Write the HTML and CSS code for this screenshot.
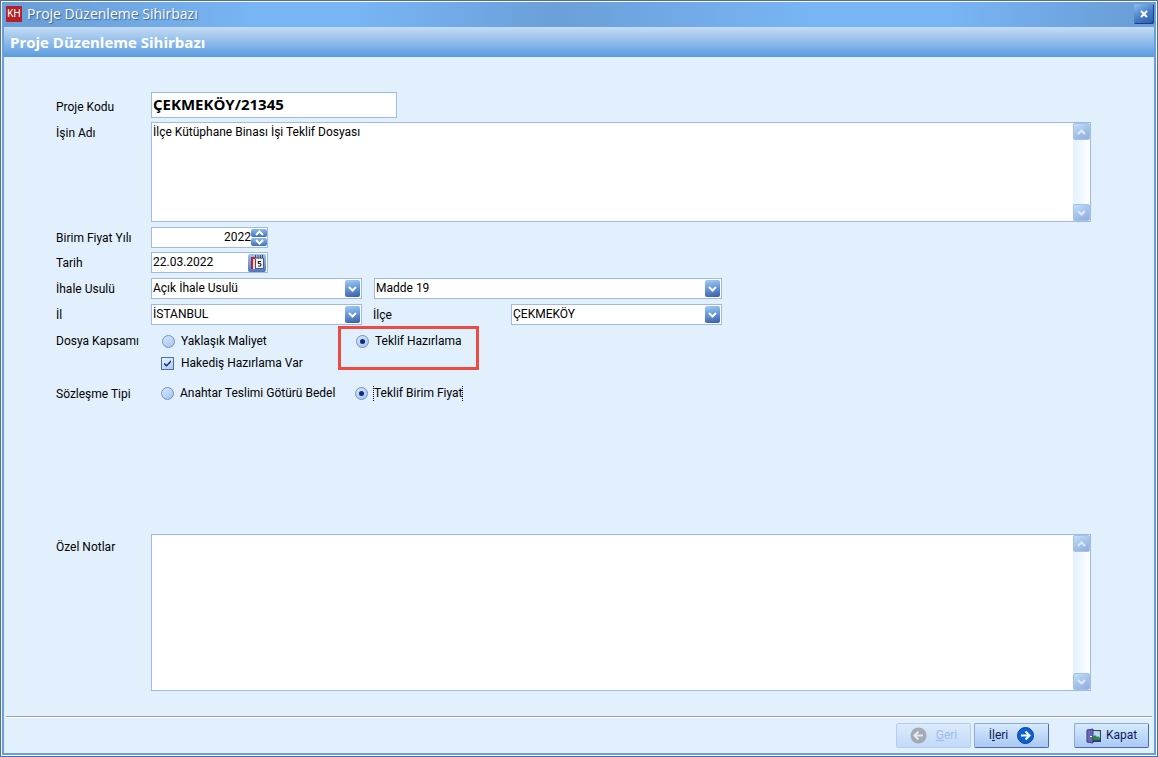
FILE: index.html
```html
<!DOCTYPE html>
<html lang="tr">
<head>
<meta charset="utf-8">
<title>Proje Düzenleme Sihirbazı</title>
<link rel="stylesheet" href="styles.css">
</head>
<body>
<svg width="0" height="0" class="defs" aria-hidden="true">
  <symbol id="down" viewBox="0 0 9 6"><path d="M1 1l3.500 3.500L8 1" fill="none" stroke="currentColor" stroke-width="2"/></symbol>
  <symbol id="up" viewBox="0 0 9 6"><path d="M1 5l3.500-3.500L8 5" fill="none" stroke="currentColor" stroke-width="2"/></symbol>
</svg>
<div class="window">
  <header class="titlebar">
    <span class="logo">KH</span>
    <span class="title">Proje Düzenleme Sihirbazı</span>
    <button class="close" type="button" aria-label="Pencereyi kapat"><svg width="8" height="8" viewBox="0 0 8 8"><path d="M1 1l6 6M7 1L1 7" stroke="#fff" stroke-width="2"/></svg></button>
  </header>
  <h1 class="banner">Proje Düzenleme Sihirbazı</h1>
  <form class="form">
    <div class="row row-code">
      <label class="label" for="kod">Proje Kodu</label>
      <input class="box code" id="kod" type="text" value="ÇEKMEKÖY/21345">
    </div>
    <div class="row">
      <label class="label" for="ad">İşin Adı</label>
      <div class="box memo memo-name">
        <textarea id="ad">İlçe Kütüphane Binası İşi Teklif Dosyası</textarea>
        <div class="scroll">
          <button type="button" disabled aria-label="Yukarı"><svg width="9" height="6"><use href="#up"/></svg></button>
          <button type="button" disabled aria-label="Aşağı"><svg width="9" height="6"><use href="#down"/></svg></button>
        </div>
      </div>
    </div>
    <div class="row row-year">
      <label class="label" for="yil">Birim Fiyat Yılı</label>
      <div class="box short">
        <input class="year" id="yil" type="number" value="2022">
        <div class="spin">
          <button type="button" aria-label="Artır"><svg width="9" height="6"><use href="#up"/></svg></button>
          <button type="button" aria-label="Azalt"><svg width="9" height="6"><use href="#down"/></svg></button>
        </div>
      </div>
    </div>
    <div class="row">
      <label class="label" for="tarih">Tarih</label>
      <div class="box short">
        <input id="tarih" type="text" value="22.03.2022">
        <button class="calendar" type="button" aria-label="Takvim">
          <svg width="17" height="17" viewBox="0 0 17 17">
            <path d="M3 3h3v12H3z" fill="#f0d0d4"/><path d="M2 3h2v12H2zM2 3h5v2H2z" fill="#c8202c"/>
            <path d="M6 4h8v10H6z" fill="#f4f4f6"/><path d="M6 3h8v2H6z" fill="#8a8f9c"/>
            <path d="M6.500 1v3M9 1v3M11.500 1v3M13.500 1v3M6.500 5v9" stroke="#4a5064"/>
            <path d="M12 7.500H9.500v2H11q1 0 1 1.200T11 12H9" fill="none" stroke="#222" stroke-width="1.200"/>
            <path d="M6 14.500h8.500V4" fill="none" stroke="#555c70"/>
          </svg>
        </button>
      </div>
    </div>
    <div class="row">
      <label class="label" for="usul">İhale Usulü</label>
      <div class="pair">
        <div class="box pick"><select id="usul"><option>Açık İhale Usulü</option></select><span class="arrow"><svg width="9" height="6"><use href="#down"/></svg></span></div>
        <div class="box pick wide"><select aria-label="Madde"><option>Madde 19</option></select><span class="arrow"><svg width="9" height="6"><use href="#down"/></svg></span></div>
      </div>
    </div>
    <div class="row">
      <label class="label" for="il">İl</label>
      <div class="pair">
        <div class="box pick"><select id="il"><option>İSTANBUL</option></select><span class="arrow"><svg width="9" height="6"><use href="#down"/></svg></span></div>
        <label class="sublabel" for="ilce">İlçe</label>
        <div class="box pick"><select id="ilce"><option>ÇEKMEKÖY</option></select><span class="arrow"><svg width="9" height="6"><use href="#down"/></svg></span></div>
      </div>
    </div>
    <div class="row row-scope">
      <span class="label">Dosya Kapsamı</span>
      <div class="choices">
        <label class="choice"><input class="radio" type="radio" name="kapsam">Yaklaşık Maliyet</label>
        <label class="choice marked"><input class="radio" type="radio" name="kapsam" checked>Teklif Hazırlama</label>
        <label class="choice"><input class="check" type="checkbox" checked>Hakediş Hazırlama Var</label>
      </div>
    </div>
    <div class="row row-contract">
      <span class="label">Sözleşme Tipi</span>
      <div class="choices">
        <label class="choice"><input class="radio" type="radio" name="tip">Anahtar Teslimi Götürü Bedel</label>
        <label class="choice"><input class="radio" type="radio" name="tip" checked><span class="focused">Teklif Birim Fiyat</span></label>
      </div>
    </div>
    <div class="row row-notes">
      <label class="label" for="notlar">Özel Notlar</label>
      <div class="box memo">
        <textarea id="notlar"></textarea>
        <div class="scroll">
          <button type="button" disabled aria-label="Yukarı"><svg width="9" height="6"><use href="#up"/></svg></button>
          <button type="button" disabled aria-label="Aşağı"><svg width="9" height="6"><use href="#down"/></svg></button>
        </div>
      </div>
    </div>
  </form>
  <footer class="footer">
    <button class="btn" type="button" disabled>
      <svg width="17" height="17" viewBox="0 0 17 17"><circle cx="8.500" cy="8.500" r="8" fill="#9a9da1"/><path d="M13 8.500H5M8.500 4.500l-4 4 4 4" fill="none" stroke="#e8edf3" stroke-width="2"/></svg>
      <span><u>G</u>eri</span>
    </button>
    <button class="btn" type="button">
      <span>İ<u>l</u>eri</span>
      <svg width="17" height="17" viewBox="0 0 17 17"><circle cx="8.500" cy="8.500" r="8" fill="#0c62d4" stroke="#0a3e96"/><path d="M4 8.500h8M8.500 4.500l4 4-4 4" fill="none" stroke="#fff" stroke-width="2"/></svg>
    </button>
    <button class="btn btn-close" type="button">
      <svg width="16" height="16" viewBox="0 0 16 16"><path d="M5 2h10v12H5z" fill="#2c3a78"/><path d="M7 3h7v9H7z" fill="#a8dcf8"/><path d="M7 12V9l2-2 2 2 1-1 2 2v2z" fill="#2f8a3a"/><path d="M11 3h3v3z" fill="#f3b73c"/><path d="M1 2l6-1v14l-6-1z" fill="#6a66b4" stroke="#3d3b88"/><path d="M4 8h2v1H4z" fill="#fff"/></svg>
      <span>Kapat</span>
    </button>
  </footer>
</div>
</body>
</html>
```
FILE: styles.css
```css
*, *::before, *::after { box-sizing: border-box; }
body {
  margin: 0;
  font: 12px/21px Roboto, "Open Sans", sans-serif;
  color: #000;
}
button, input, select, textarea { font: inherit; color: inherit; margin: 0; padding: 0; border: 0; outline: 0; }
button { display: flex; align-items: center; justify-content: center; }
.defs { position: absolute; }

.window {
  display: flex;
  flex-direction: column;
  min-height: 100vh;
  padding: 1px;
  border: 1px solid #4a6db5;
  background: #6b9fd8;
  box-shadow: inset 0 0 0 1px #fff;
}

.titlebar {
  display: flex; align-items: center; height: 25px; padding: 0 2px 0 4px;
  background: linear-gradient(90deg, #6b9fd8 3%, #78b5f4 22% 31%, #6b9fd8 48%, #78b5f4 70% 82%, #6b9fd8 97%);
}
.logo {
  width: 16px; height: 16px; margin-bottom: 1px;
  background: #b51f27; color: #fff;
  font-size: 10px; line-height: 16px; text-align: center;
}
.title { flex: 1; padding: 0 0 2px 5px; font-family: "Open Sans", sans-serif; font-size: 14px; color: #fff; text-shadow: 1px 1px 1px #3b6296; }
.close {
  width: 20px; height: 20px; margin-bottom: 1px; border-radius: 2px;
  background: linear-gradient(150deg, #8fc0f0, #4a80c8 50%, #2a58a8);
  box-shadow: inset -1px -1px 0 #1a3f88;
}
.banner {
  margin: 0 2px; padding: 0 6px;
  font: 700 15px/30px "Open Sans", sans-serif; color: #fff;
  background: linear-gradient(#c5dcf4, #5a9ce0);
}

.form {
  flex: 1;
  display: flex; flex-direction: column;
  margin: 0 2px; padding: 35px 63px 25px 52px;
  background: #e2f0fe;
}
.row { display: flex; margin-bottom: 5px; }
.row-code, .row-year { margin-bottom: 4px; }
.row-code .label { padding-top: 4px; }
.row-scope { margin-bottom: 9px; }
.row-notes { flex: 1; min-height: 157px; margin: 125px 0 0; }
.row-notes .label { padding-top: 2px; }
.label { width: 95px; flex: none; line-height: 23px; margin-bottom: -2px; }

.box { display: flex; background: #fff; border: 1px solid #9dbbe8; }
.box input { width: 100%; min-width: 0; background: none; }
.code.box { width: 246px; height: 26px; padding: 0 1px 2px; font: 700 15px/22px "Open Sans", sans-serif; }
.memo { flex: 1; min-width: 0; }
.memo-name { height: 100px; }
.memo textarea { flex: 1; min-width: 0; padding: 1px; line-height: 17px; resize: none; background: none; }
.scroll {
  width: 17px;
  display: flex; flex-direction: column; justify-content: space-between;
  background: linear-gradient(90deg, #e2f0fe, #fff);
}
.scroll button {
  width: 17px; height: 17px; border-radius: 2px; color: #dceafa;
  background: linear-gradient(150deg, #c4e0f8, #a5c3ea 50%, #92abd9);
  border: 1px solid #a5c3ea;
}

.short { width: 117px; height: 21px; padding-left: 1px; line-height: 19px; }
.year { text-align: right; appearance: textfield; }
.year::-webkit-inner-spin-button { appearance: none; }
.spin { display: flex; flex-direction: column; gap: 1px; padding: 1px 0; }
.spin button {
  width: 16px; height: 8px; color: #fff; border-radius: 2px;
  background: linear-gradient(#8dbbee, #3f6fb9);
}
.calendar {
  flex: none; align-self: center;
  width: 18px; height: 18px; margin-right: 1px; border-radius: 2px;
  background: linear-gradient(#9cc6f2, #4a78bf);
}

.pair { display: flex; gap: 12px; }
.pick { position: relative; width: 211px; height: 21px; }
.wide { width: 348px; }
.pick select { width: 100%; padding: 0 18px 0 1px; appearance: none; background: none; line-height: 19px; }
.arrow {
  position: absolute; right: 1px; top: 1px;
  width: 15px; height: 17px;
  display: flex; align-items: center; justify-content: center;
  color: #fff; border-radius: 2px; pointer-events: none;
  background: linear-gradient(170deg, #a3cdf6, #6596d6 50%, #3a5ca8);
}
.sublabel { width: 126px; margin-left: -1px; line-height: 23px; margin-bottom: -2px; }

.choices { display: grid; grid-template-columns: 194px auto; padding: 1px 0 0 11px; row-gap: 1px; }
.row-scope .choices { margin-bottom: -1px; }
.row-contract .choices { padding: 0 0 0 10px; }
.choice { display: flex; align-items: center; gap: 6px; white-space: nowrap; }
.radio, .check {
  appearance: none; flex: none;
  width: 13px; height: 13px;
  display: flex; align-items: center; justify-content: center;
}
.radio { border: 1px solid #7590c4; border-radius: 50%; background: linear-gradient(150deg, #d5e9fc, #a3c4f0); }
.radio:checked::before { content: ""; width: 5px; height: 5px; border-radius: 50%; background: #13287e; }
.check { margin: 0 1px 0 -1px; border: 1px solid #4f6cae; background: linear-gradient(150deg, #eaf5ff, #aac8f0); }
.check:checked::before {
  content: ""; width: 7px; height: 7px; background: #13287e;
  clip-path: polygon(0 40%, 36% 68%, 100% 5%, 100% 32%, 36% 98%, 0 66%);
}
.marked { position: relative; }
.marked::after {
  content: ""; position: absolute;
  left: -18px; top: -5px; width: 141px; height: 44px;
  border: 3px solid #ee4b44; pointer-events: none;
}
.row-contract { padding-top: 1px; }
.focused { margin-left: -1px; line-height: 15px; border: 1px dotted #000; border-width: 0 1px; }

.footer {
  display: flex; justify-content: flex-end; gap: 3px;
  margin: 0 2px 2px; padding: 7px 5px 5px;
  background:
    linear-gradient(#a0a0a0 50%, #fff 50%) center top / calc(100% - 4px) 2px no-repeat,
    #e2f0fe;
}
.btn {
  gap: 9px; width: 75px; height: 25px; line-height: 21px;
  color: #0c1c5c; border: 1px solid #8aa9de; border-bottom-color: #4a68b4; border-right-color: #4a68b4; border-radius: 2px;
  background: linear-gradient(#d6eafd, #a9c8f2);
}
.btn:disabled { color: #9dbbe8; border-color: #b4cdf0; background: linear-gradient(#dcebfc, #c2d9f7); }
.btn:disabled svg { opacity: .8; }
.btn-close { margin-left: 22px; gap: 4px; }
```
